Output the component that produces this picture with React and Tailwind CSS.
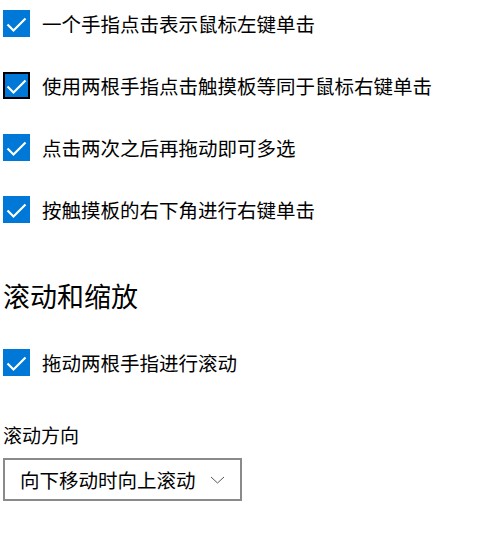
import { useState } from 'react'

const font = { fontFamily: '"Noto Sans CJK SC", "Noto Sans", sans-serif' }

function Check({ focused }) {
  return (
    <div
      className={
        'w-[27px] h-[27px] shrink-0 bg-[#0078d7] flex items-center justify-center ' +
        (focused ? 'border-2 border-black' : '')
      }
    >
      <svg width="27" height="27" viewBox="0 0 27 27" className={focused ? '-m-[2px]' : ''}>
        <polyline points="4.5,14.5 10.5,20.5 22.5,8.5" fill="none" stroke="#fff" strokeWidth="2.2" />
      </svg>
    </div>
  )
}

function Row({ label, focused }) {
  return (
    <div className="flex items-center h-[27px]">
      <Check focused={focused} />
      <span className="ml-[12px] text-[19.5px] leading-[27px] text-black">{label}</span>
    </div>
  )
}

export default function App() {
  const [dir] = useState('向下移动时向上滚动')
  const rows = [
    '一个手指点击表示鼠标左键单击',
    '使用两根手指点击触摸板等同于鼠标右键单击',
    '点击两次之后再拖动即可多选',
    '按触摸板的右下角进行右键单击',
  ]

  return (
    <div className="w-[480px] h-[543px] bg-white overflow-hidden pl-[3px] pt-[10px]" style={font}>
      <div className="flex flex-col gap-[35px]">
        {rows.map((r, i) => (
          <Row key={r} label={r} focused={i === 1} />
        ))}
      </div>

      <h2 className="mt-[57px] text-[27px] leading-[32px] font-normal text-black">滚动和缩放</h2>

      <div className="mt-[37px]">
        <Row label="拖动两根手指进行滚动" />
      </div>

      <div className="mt-[47px] text-[19px] leading-[24px] text-black">滚动方向</div>

      <button className="mt-[11px] w-[239px] h-[43px] border-[2.5px] border-[#8a8a8a] bg-white flex items-center justify-between pl-[15px] pr-[15px]">
        <span className="text-[19.5px] leading-[27px] text-black">{dir}</span>
        <svg width="15" height="8" viewBox="0 0 15 8">
          <polyline points="1,1 7.5,7 14,1" fill="none" stroke="#555" strokeWidth="1" />
        </svg>
      </button>
    </div>
  )
}
